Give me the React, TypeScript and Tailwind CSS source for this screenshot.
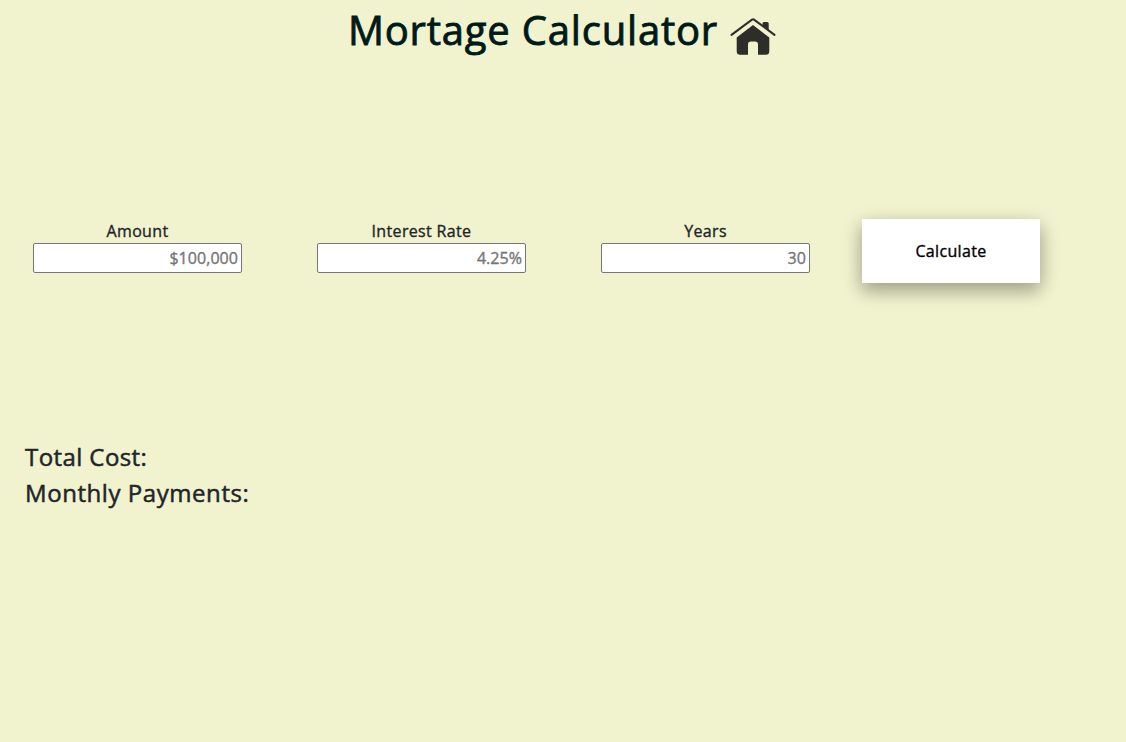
import React from "react";

const fields = [
  { label: "Amount", placeholder: "$100,000" },
  { label: "Interest Rate", placeholder: "4.25%" },
  { label: "Years", placeholder: "30" },
];

function HouseIcon() {
  return (
    <svg width="46" height="39" viewBox="0 0 46 39" className="mt-[17px] ml-[12px] shrink-0" fill="#2d2d2a">
      <path d="M23 8 L39.300 20.500 V34.200 Q39.300 37.700 35.800 37.700 H28 V27.500 Q28 24.500 25 24.500 H21 Q18 24.500 18 27.500 V37.700 H10.200 Q6.700 37.700 6.700 34.200 V20.500 Z" />
      <path d="M32.500 6.500 Q32.500 5 34 5 H37.200 Q38.700 5 38.700 6.500 V13.800 L32.500 9 Z" />
      <path d="M1.500 17.800 L22 2.600 Q23 1.900 24 2.600 L44.500 17.800" fill="none" stroke="#2d2d2a" strokeWidth="2.100" strokeLinecap="round" />
    </svg>
  );
}

export default function App() {
  return (
    <main className="min-h-screen bg-[#f1f2ce] font-['Open_Sans',sans-serif] text-base font-medium text-[#212529] [-webkit-text-stroke-width:0.35px]">
      <header className="flex h-[61px] justify-center pr-[2px]">
        <h1 className="text-[40px] leading-[60px] tracking-[0.8px] text-[#001a1a] [-webkit-text-stroke-width:0.85px]">Mortage Calculator</h1>
        <HouseIcon />
      </header>
      <form className="flex h-[378px] items-start pt-[158px] pl-[33px]">
        {fields.map((field) => (
          <label key={field.label} className="mr-[75px] flex w-[209px] flex-col text-center leading-6 tracking-[0.34px]">
            {field.label}
            <input
              placeholder={field.placeholder}
              className="h-[30px] w-full rounded-[2px] border border-[#767676] bg-white px-[3px] text-right tracking-[0.05px] placeholder:text-[#757575]"
            />
          </label>
        ))}
        <button type="button" className="-ml-[23px] h-16 w-[178px] bg-white tracking-[0.34px] text-black shadow-[0_8px_16px_0_rgba(0,0,0,0.2),0_6px_20px_0_rgba(0,0,0,0.19)]">
          Calculate
        </button>
      </form>
      <section className="pl-[25px] text-2xl leading-9 tracking-[0.56px] [-webkit-text-stroke-width:0.5px]">
        <p className="tracking-[0.42px]">Total Cost:</p>
        <p>Monthly Payments:</p>
      </section>
    </main>
  );
}
